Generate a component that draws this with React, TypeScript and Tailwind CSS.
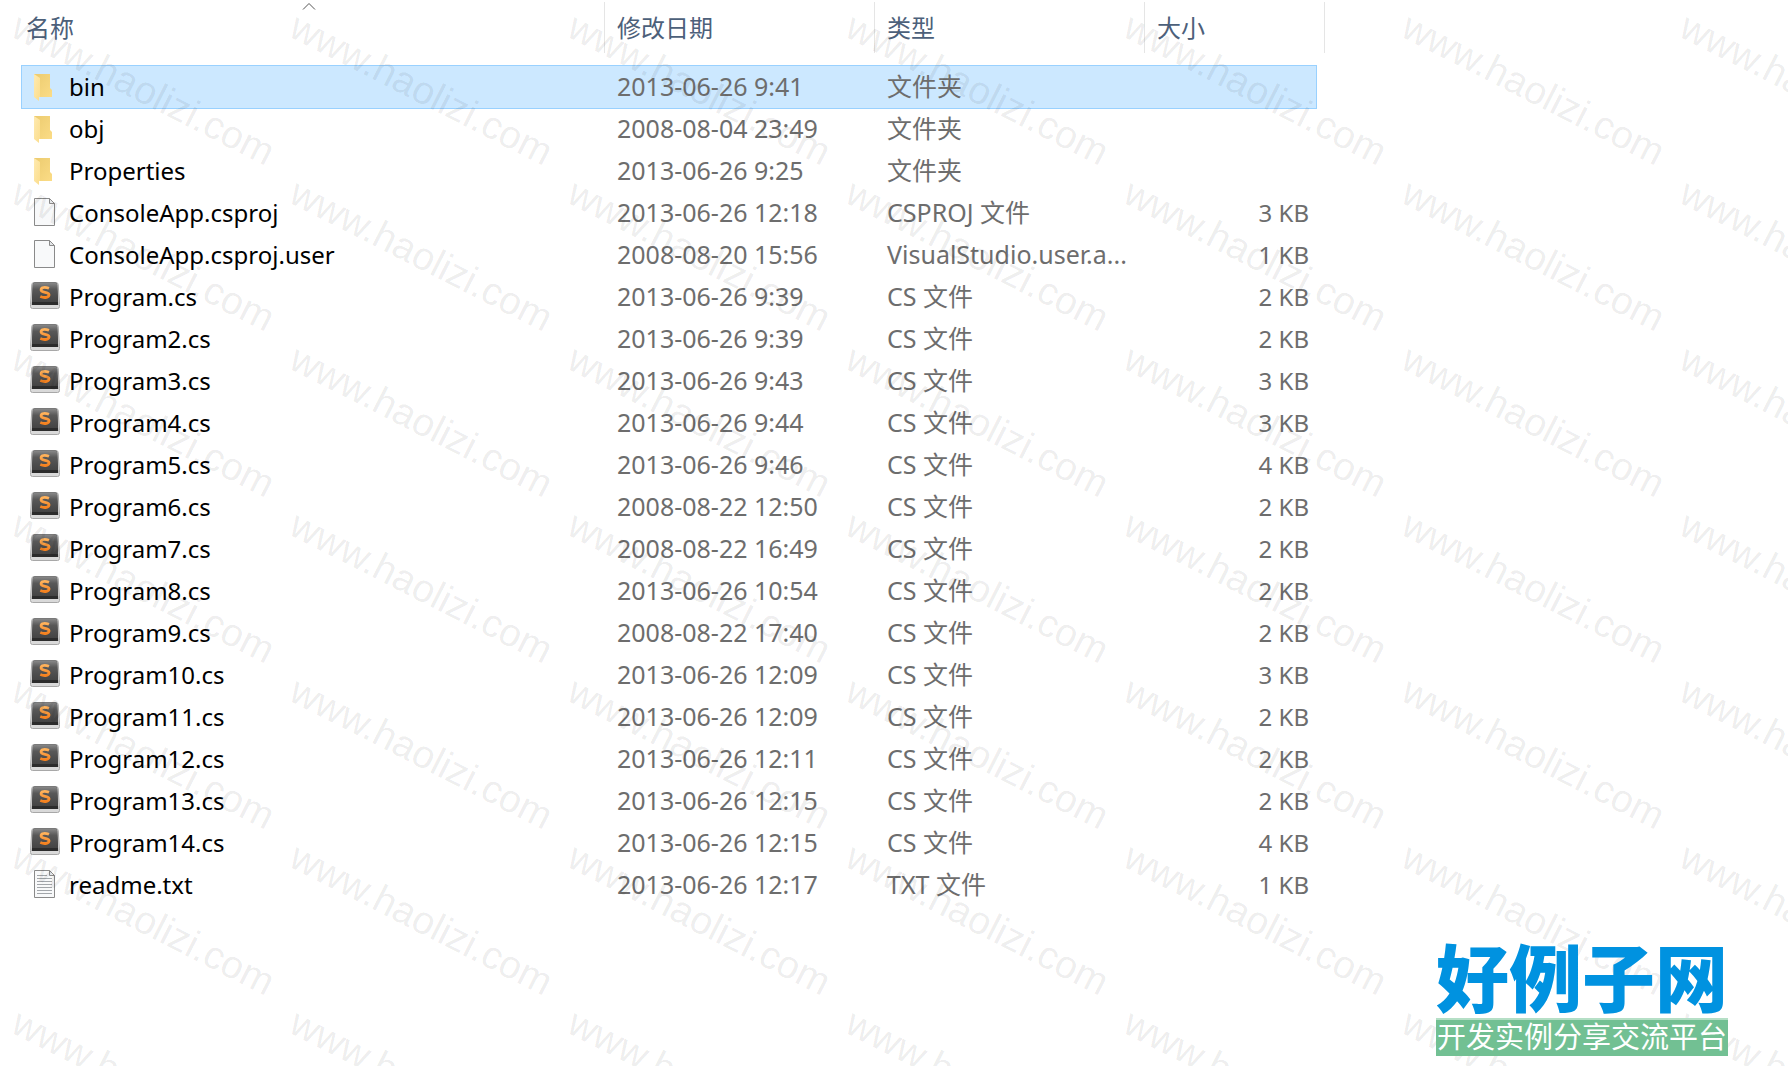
import clsx from "clsx";

type FileKind = "folder" | "blank" | "sublime" | "text";

interface FileEntry {
  name: string;
  modified: string;
  type: string;
  size?: string;
  kind: FileKind;
  selected?: boolean;
}

const files: FileEntry[] = [
  { name: "bin", modified: "2013-06-26 9:41", type: "文件夹", kind: "folder", selected: true },
  { name: "obj", modified: "2008-08-04 23:49", type: "文件夹", kind: "folder" },
  { name: "Properties", modified: "2013-06-26 9:25", type: "文件夹", kind: "folder" },
  { name: "ConsoleApp.csproj", modified: "2013-06-26 12:18", type: "CSPROJ 文件", size: "3 KB", kind: "blank" },
  { name: "ConsoleApp.csproj.user", modified: "2008-08-20 15:56", type: "VisualStudio.user.a...", size: "1 KB", kind: "blank" },
  { name: "Program.cs", modified: "2013-06-26 9:39", type: "CS 文件", size: "2 KB", kind: "sublime" },
  { name: "Program2.cs", modified: "2013-06-26 9:39", type: "CS 文件", size: "2 KB", kind: "sublime" },
  { name: "Program3.cs", modified: "2013-06-26 9:43", type: "CS 文件", size: "3 KB", kind: "sublime" },
  { name: "Program4.cs", modified: "2013-06-26 9:44", type: "CS 文件", size: "3 KB", kind: "sublime" },
  { name: "Program5.cs", modified: "2013-06-26 9:46", type: "CS 文件", size: "4 KB", kind: "sublime" },
  { name: "Program6.cs", modified: "2008-08-22 12:50", type: "CS 文件", size: "2 KB", kind: "sublime" },
  { name: "Program7.cs", modified: "2008-08-22 16:49", type: "CS 文件", size: "2 KB", kind: "sublime" },
  { name: "Program8.cs", modified: "2013-06-26 10:54", type: "CS 文件", size: "2 KB", kind: "sublime" },
  { name: "Program9.cs", modified: "2008-08-22 17:40", type: "CS 文件", size: "2 KB", kind: "sublime" },
  { name: "Program10.cs", modified: "2013-06-26 12:09", type: "CS 文件", size: "3 KB", kind: "sublime" },
  { name: "Program11.cs", modified: "2013-06-26 12:09", type: "CS 文件", size: "2 KB", kind: "sublime" },
  { name: "Program12.cs", modified: "2013-06-26 12:11", type: "CS 文件", size: "2 KB", kind: "sublime" },
  { name: "Program13.cs", modified: "2013-06-26 12:15", type: "CS 文件", size: "2 KB", kind: "sublime" },
  { name: "Program14.cs", modified: "2013-06-26 12:15", type: "CS 文件", size: "4 KB", kind: "sublime" },
  { name: "readme.txt", modified: "2013-06-26 12:17", type: "TXT 文件", size: "1 KB", kind: "text" },
];

const columns = [
  { label: "名称", sorted: true },
  { label: "修改日期" },
  { label: "类型" },
  { label: "大小", last: true },
];

const FolderIcon = () => (
  <svg width="30" height="32" viewBox="0 0 30 32">
    <defs>
      <linearGradient id="folderBack" x1="0" y1="0" x2="1" y2="1">
        <stop offset="0" stopColor="#eccb6f" />
        <stop offset="1" stopColor="#fbdc86" />
      </linearGradient>
      <linearGradient id="folderFront" x1="0" y1="0" x2="1" y2="1">
        <stop offset="0" stopColor="#ffeab0" />
        <stop offset="1" stopColor="#fbdd8c" />
      </linearGradient>
    </defs>
    <path d="M4 3h16v14l2 2v7H4z" fill="url(#folderBack)" />
    <path d="M4 3l6 4v19H9v4l-5-4z" fill="url(#folderFront)" />
  </svg>
);

const PageIcon = ({ lined }: { lined?: boolean }) => (
  <svg width="30" height="32" viewBox="0 0 30 32">
    <path d="M4.500 1.500h15l5 5v22h-20z" fill="#f8f9fa" stroke="#8a8a8a" />
    <path d="M19.500 1.500v5h5z" fill="#e4e6e8" stroke="#8a8a8a" />
    {lined && (
      <path
        d="M7 6.500h10M7 9.500h15M7 12.500h15M7 15.500h15M7 18.500h15M7 21.500h15M7 24.500h15"
        stroke="#a2a6aa"
      />
    )}
  </svg>
);

const SublimeIcon = () => (
  <svg width="30" height="32" viewBox="0 0 30 32">
    <defs>
      <linearGradient id="keyTop" x1="0" y1="0" x2="0" y2="1">
        <stop offset="0" stopColor="#8a8a8a" />
        <stop offset="0.35" stopColor="#585858" />
        <stop offset="1" stopColor="#444444" />
      </linearGradient>
      <linearGradient id="keyLetter" x1="0" y1="0" x2="0" y2="1">
        <stop offset="0" stopColor="#ffb35c" />
        <stop offset="1" stopColor="#f58220" />
      </linearGradient>
    </defs>
    <path
      d="M4 1.500h22q2 0 2.200 2l1.300 20v2q0 2-2 2h-25q-2 0-2-2v-2l1.300-20q.2-2 2.200-2z"
      fill="#d9d9d9"
      stroke="#a8a8a8"
    />
    <path d="M5 1.500h20q2 0 2.200 2l1 20.500h-26.400l1-20.500q.2-2 2.200-2z" fill="#2c2c2c" />
    <path d="M5 1.500h20q2 0 2.200 2l.8 17.500h-26l.8-17.500q.2-2 2.200-2z" fill="url(#keyTop)" />
    <path
      d="M19 7.300q-4-1.600-6.500-.6-2.200 1.400-1 3.200 1 1 3.500 1.400 3.600.6 4 2.200.3 2-2.500 2.800-3 .6-6.200-.8"
      fill="none"
      stroke="url(#keyLetter)"
      strokeWidth="2.800"
    />
  </svg>
);

const FileIcon = ({ kind }: { kind: FileKind }) => {
  if (kind === "folder") return <FolderIcon />;
  if (kind === "sublime") return <SublimeIcon />;
  return <PageIcon lined={kind === "text"} />;
};

const Watermark = () => (
  <div
    aria-hidden="true"
    className="pointer-events-none absolute inset-0 grid auto-rows-[166px] grid-cols-[repeat(7,278px)] overflow-hidden pt-[6px] pl-6 font-['Liberation_Sans',Arial,sans-serif] text-[39px] leading-10 text-black/8 select-none"
  >
    {Array.from({ length: 49 }, (_, i) => (
      <span key={i} className="origin-top-left rotate-[27deg] whitespace-nowrap">
        www.haolizi.com
      </span>
    ))}
  </div>
);

const FileTable = () => (
  <table className="ml-[22px] w-[1294px] table-fixed border-separate border-spacing-0 text-left">
    <colgroup>
      <col className="w-[583px]" />
      <col className="w-[270px]" />
      <col className="w-[270px]" />
      <col />
    </colgroup>
    <thead>
      <tr className="h-[66px]">
        {columns.map((column, i) => (
          <th key={column.label} scope="col" className="p-0 pt-0.5 align-top font-normal">
            <div
              className={clsx(
                "relative h-[51px] border-r border-[#e5e5e5]",
                column.last && "-mr-[9px]"
              )}
            >
              <button
                className={clsx(
                  "h-full w-full text-left text-2xl text-[#4c607a]",
                  i === 0 ? "pl-1" : "pl-3"
                )}
              >
                {column.label}
              </button>
              {column.sorted && (
                <svg
                  className="absolute top-0 left-[280px]"
                  width="14"
                  height="8"
                  viewBox="0 0 14 8"
                >
                  <path d="M1 7.500l6-6 6 6" fill="none" stroke="#555" />
                </svg>
              )}
            </div>
          </th>
        ))}
      </tr>
    </thead>
    <tbody>
      {files.map(file => (
        <tr
          key={file.name}
          className={clsx(
            "h-[42px] text-[#6d6d6d]",
            file.selected && "bg-[#cce8ff] outline outline-[#99d1ff]"
          )}
        >
          <td className="p-0">
            <div className="flex items-center gap-[9px] pl-2 text-2xl text-black">
              <FileIcon kind={file.kind} />
              <span>{file.name}</span>
            </div>
          </td>
          <td className="p-0 pb-0.5 pl-3">{file.modified}</td>
          <td className="p-0 pb-0.5 pl-3 whitespace-nowrap">{file.type}</td>
          <td className="p-0 pr-[7px] text-right text-2xl">{file.size}</td>
        </tr>
      ))}
    </tbody>
  </table>
);

const SiteLogo = () => (
  <div className="relative w-[292px] font-['Noto_Sans_CJK_SC',sans-serif]">
    <div className="h-[76px] text-[73px] leading-[64px] font-black whitespace-nowrap text-[#0092e0]">
      好例子网
    </div>
    <div className="h-[38px] border-t-2 border-[#b5dfc6] bg-[#72c093] text-center text-[29px] leading-[30px] whitespace-nowrap text-white">
      开发实例分享交流平台
    </div>
  </div>
);

export default function App() {
  return (
    <div className="relative min-h-screen overflow-hidden bg-white font-['Noto_Sans','Noto_Sans_CJK_SC',sans-serif] text-[25px] leading-8">
      <FileTable />
      <Watermark />
      <footer className="flex justify-end pt-9 pr-[60px] pb-2">
        <SiteLogo />
      </footer>
    </div>
  );
}
